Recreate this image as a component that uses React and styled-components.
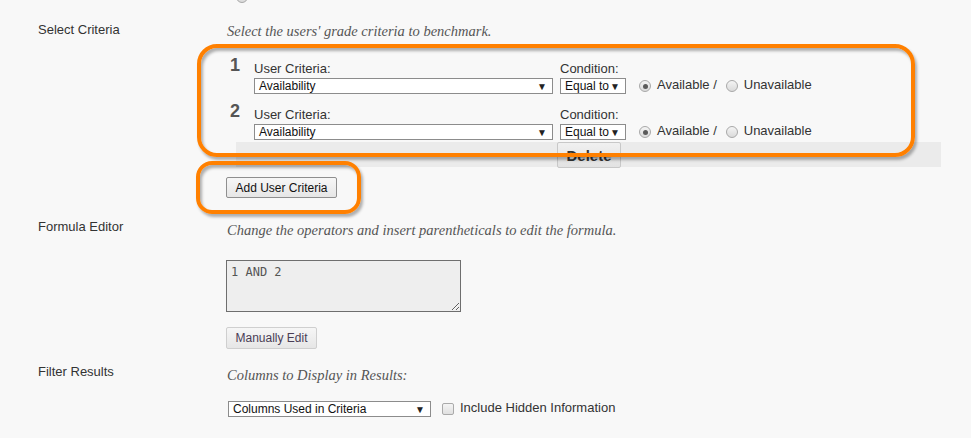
import React from 'react';
import styled, { createGlobalStyle } from 'styled-components';

const GlobalStyle = createGlobalStyle`
  html, body {
    margin: 0;
    padding: 0;
    background: #f8f8f8;
  }
  body {
    font-family: "Liberation Sans", Arial, sans-serif;
    color: #333;
  }
`;

const criteria = [
  { id: 1, field: 'Availability', condition: 'Equal to' },
  { id: 2, field: 'Availability', condition: 'Equal to' },
];

const App = () => {
  return (
    <StPage>
      <GlobalStyle />
      <StTopFragment>
        <StRadio />
      </StTopFragment>

      <StSection $top={22}>
        <StLabel>Select Criteria</StLabel>
        <StContent>
          <StHint>Select the users' grade criteria to benchmark.</StHint>
          <StCriteriaBox>
            {criteria.map((c) => (
              <StCriteriaRow key={c.id}>
                <StNumber>{c.id}</StNumber>
                <StField>
                  <StFieldLabel>User Criteria:</StFieldLabel>
                  <StSelect $w={299}>
                    <span>{c.field}</span>
                    <StArrow>▼</StArrow>
                  </StSelect>
                </StField>
                <StField $gap={7}>
                  <StFieldLabel>Condition:</StFieldLabel>
                  <StSelect $w={66}>
                    <span>{c.condition}</span>
                    <StArrow>▼</StArrow>
                  </StSelect>
                </StField>
                <StRadioGroup>
                  <StRadio $checked />
                  <StRadioText>Available /</StRadioText>
                  <StRadio />
                  <StRadioText>Unavailable</StRadioText>
                </StRadioGroup>
              </StCriteriaRow>
            ))}
            <StStrip>
              <StDeleteButton>Delete</StDeleteButton>
            </StStrip>
            <StHighlight $left={-30} $top={-11} $w={718} $h={113} $r={20} />
          </StCriteriaBox>
          <StAddWrap>
            <StButton>Add User Criteria</StButton>
            <StHighlight $left={-30} $top={-16} $w={165} $h={53} $r={16} />
          </StAddWrap>
        </StContent>
      </StSection>

      <StSection $top={21}>
        <StLabel>Formula Editor</StLabel>
        <StContent>
          <StHint $offset={2}>Change the operators and insert parentheticals to edit the formula.</StHint>
          <StFormula readOnly defaultValue='1 AND 2' />
          <StLightButton>Manually Edit</StLightButton>
        </StContent>
      </StSection>

      <StSection $top={15}>
        <StLabel>Filter Results</StLabel>
        <StContent>
          <StHint $offset={2}>Columns to Display in Results:</StHint>
          <StFilterRow>
            <StSelect $w={203}>
              <span>Columns Used in Criteria</span>
              <StArrow>▼</StArrow>
            </StSelect>
            <StCheckbox />
            <StRadioText>Include Hidden Information</StRadioText>
          </StFilterRow>
        </StContent>
      </StSection>
    </StPage>
  );
};

export default App;

const StPage = styled.div`
  width: 971px;
  height: 438px;
  overflow: hidden;
  background: #f8f8f8;
`;

const StTopFragment = styled.div`
  display: flex;
  height: 12px;
  padding-left: 236px;
  margin-top: -9px;
  margin-bottom: -3px;
`;

const StSection = styled.section`
  display: grid;
  grid-template-columns: 189px 1fr;
  padding-left: 38px;
  margin-top: ${(p) => p.$top}px;
`;

const StLabel = styled.div`
  font-size: 13px;
  line-height: 16px;
  color: #333;
`;

const StContent = styled.div`
  display: flex;
  flex-direction: column;
  align-items: flex-start;
`;

const StHint = styled.div`
  font-family: "Liberation Serif", "Times New Roman", serif;
  font-style: italic;
  font-size: 14.5px;
  line-height: 18px;
  color: #555;
  margin-top: ${(p) => p.$offset || 0}px;
`;

const StCriteriaBox = styled.div`
  position: relative;
  margin-top: 15px;
  width: 714px;
  display: flex;
  flex-direction: column;
  gap: 5px;
`;

const StCriteriaRow = styled.div`
  display: flex;
  align-items: flex-end;
  height: 41px;
  padding-bottom: 2px;
  box-sizing: border-box;
`;

const StNumber = styled.div`
  align-self: flex-start;
  width: 24px;
  padding-left: 3px;
  font-size: 18px;
  font-weight: bold;
  line-height: 20px;
  color: #555;
`;

const StField = styled.div`
  display: flex;
  flex-direction: column;
  margin-left: ${(p) => p.$gap || 0}px;
`;

const StFieldLabel = styled.div`
  font-size: 13px;
  line-height: 16px;
  color: #333;
  margin-bottom: 1px;
`;

const StSelect = styled.div`
  display: flex;
  align-items: center;
  justify-content: space-between;
  box-sizing: border-box;
  width: ${(p) => p.$w}px;
  height: 16px;
  padding: 0 5px 0 4px;
  border: 1px solid #8c8c8c;
  background: #fff;
  font-size: 12px;
  color: #111;
  white-space: nowrap;
`;

const StArrow = styled.span`
  font-size: 10px;
  color: #222;
`;

const StRadioGroup = styled.div`
  display: flex;
  align-items: center;
  height: 16px;
  margin-left: 13px;
`;

const StRadio = styled.span`
  position: relative;
  flex: none;
  width: 12px;
  height: 12px;
  box-sizing: border-box;
  border-radius: 50%;
  border: 1px solid #a8a8a8;
  background: linear-gradient(#f4f4f4, #dadada);

  &::after {
    content: '';
    display: ${(p) => (p.$checked ? 'block' : 'none')};
    position: absolute;
    inset: 2.5px;
    border-radius: 50%;
    background: #5a5a5a;
  }

  & + span {
    margin-left: 6px;
  }
`;

const StRadioText = styled.span`
  font-size: 13px;
  color: #333;
  margin-right: 9px;
  margin-top: -3px;
`;

const StStrip = styled.div`
  margin-top: -5px;
  margin-left: 9px;
  width: 705px;
  height: 25px;
  background: #ebebeb;
`;

const StDeleteButton = styled.button`
  margin-left: 321px;
  width: 64px;
  height: 26px;
  padding: 0;
  border: 1px solid #c8c8c8;
  border-radius: 2px;
  background: linear-gradient(#f0f0f0, #e2e2e2);
  font-family: "Liberation Sans", Arial, sans-serif;
  font-size: 15px;
  font-weight: bold;
  color: #333;
`;

const StHighlight = styled.div`
  position: absolute;
  left: ${(p) => p.$left}px;
  top: ${(p) => p.$top}px;
  width: ${(p) => p.$w}px;
  height: ${(p) => p.$h}px;
  box-sizing: border-box;
  border: 4px solid #ff8000;
  border-radius: ${(p) => p.$r}px;
  box-shadow: 2px 3px 3px rgba(0, 0, 0, 0.3), inset 2px 3px 3px rgba(0, 0, 0, 0.3);
  pointer-events: none;
`;

const StAddWrap = styled.div`
  position: relative;
  margin-top: 10px;
  margin-left: -1px;
`;

const StButton = styled.button`
  display: block;
  height: 21px;
  width: 111px;
  padding: 0;
  border: 1px solid #8f8f8f;
  border-radius: 2px;
  background: linear-gradient(#f7f7f7, #e6e6e6);
  font-family: "Liberation Sans", Arial, sans-serif;
  font-size: 12px;
  color: #111;
`;

const StFormula = styled.textarea`
  margin-top: 21px;
  margin-left: -1px;
  width: 235px;
  height: 52px;
  box-sizing: border-box;
  padding: 4px 4px;
  border: 1px solid #6e6e6e;
  background: #eeeeee;
  font-family: "DejaVu Sans Mono", "Liberation Mono", monospace;
  font-size: 12px;
  color: #555;
  outline: none;
`;

const StLightButton = styled.button`
  margin-top: 15px;
  margin-left: -1px;
  width: 91px;
  height: 22px;
  padding: 0;
  border: 1px solid #cfcfcf;
  border-radius: 2px;
  background: linear-gradient(#f6f6f6, #e6e6e6);
  font-family: "Liberation Sans", Arial, sans-serif;
  font-size: 12px;
  color: #4a3d55;
`;

const StFilterRow = styled.div`
  display: flex;
  align-items: center;
  margin-top: 17px;
  margin-left: 1px;
`;

const StCheckbox = styled.span`
  flex: none;
  width: 12px;
  height: 12px;
  box-sizing: border-box;
  margin-left: 11px;
  margin-right: 6px;
  border: 1px solid #aaa;
  border-radius: 2px;
  background: linear-gradient(#f4f4f4, #e0e0e0);
`;
